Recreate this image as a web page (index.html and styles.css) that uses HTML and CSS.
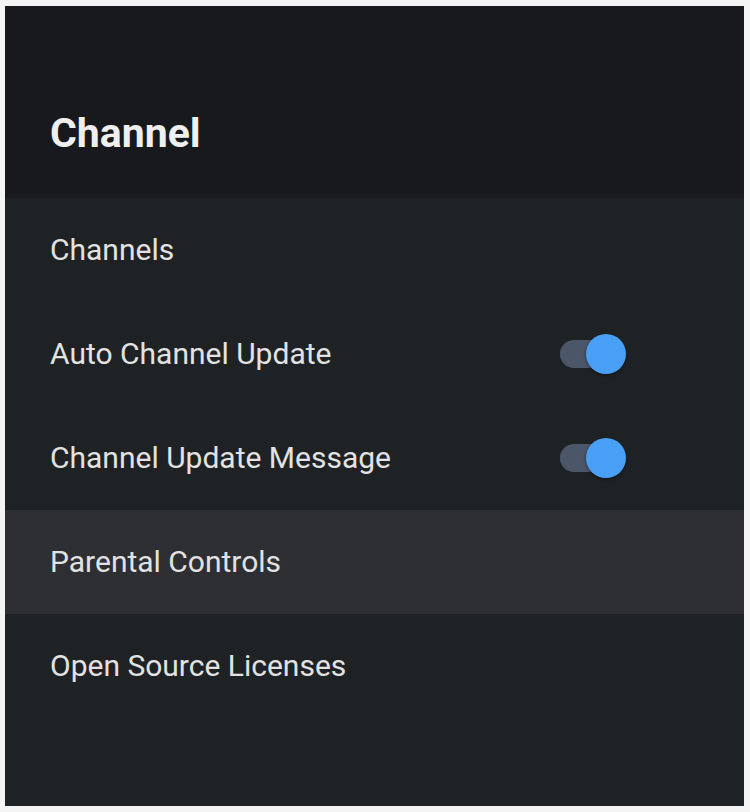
FILE: index.html
```html
<!DOCTYPE html>
<html lang="en">
<head>
    <meta charset="UTF-8">
    <meta name="viewport" content="width=device-width, initial-scale=1.0">
    <title>Channel</title>
    <link rel="stylesheet" href="styles.css">
</head>
<body>
    <div class="settings-panel">
        <header class="panel-header">
            <h1>Channel</h1>
        </header>

        <ul class="settings-list">
            <li class="settings-item">
                <span class="item-label">Channels</span>
            </li>
            <li class="settings-item">
                <span class="item-label">Auto Channel Update</span>
                <span class="toggle on"><span class="toggle-knob"></span></span>
            </li>
            <li class="settings-item">
                <span class="item-label">Channel Update Message</span>
                <span class="toggle on"><span class="toggle-knob"></span></span>
            </li>
            <li class="settings-item focused">
                <span class="item-label">Parental Controls</span>
            </li>
            <li class="settings-item">
                <span class="item-label">Open Source Licenses</span>
            </li>
        </ul>
    </div>
</body>
</html>
```

FILE: styles.css
```css
:root {
    --header-bg: #17191c;
    --list-bg: #1f2225;
    --focus-bg: #2d2f32;
    --text: #e2e2e2;
    --track: #4b5668;
    --knob: #4a9ff6;
    --frame: #f4f4f4;
}

html, body {
    margin: 0;
    height: 100%;
}

body {
    font-family: Roboto, 'Noto Sans', sans-serif;
    background-color: var(--frame);
    padding: 6px 6px 6px 5px;
    box-sizing: border-box;
}

.settings-panel {
    height: 100%;
    background-color: var(--list-bg);
    display: flex;
    flex-direction: column;
    color: var(--text);
}

.panel-header {
    background-color: var(--header-bg);
    height: 192px;
    display: flex;
    align-items: flex-end;
    padding: 0 45px 44px;
    box-sizing: border-box;
}

.panel-header h1 {
    margin: 0;
    font-size: 41px;
    font-weight: 700;
    line-height: 1;
    color: #efefef;
}

.settings-list {
    list-style: none;
    margin: 0;
    padding: 0;
}

.settings-item {
    height: 104px;
    display: flex;
    align-items: center;
    justify-content: space-between;
    padding: 0 130px 0 45px;
}

.settings-item.focused {
    background-color: var(--focus-bg);
}

.item-label {
    font-size: 30px;
    line-height: 1;
}

/* switch, always on here */
.toggle {
    position: relative;
    width: 54px;
    height: 28px;
    border-radius: 14px;
    background-color: var(--track);
}

.toggle-knob {
    position: absolute;
    top: -6px;
    right: -12px;
    width: 40px;
    height: 40px;
    border-radius: 50%;
    background-color: var(--knob);
    box-shadow: 0 1px 3px rgba(0, 0, 0, 0.5);
}
```
